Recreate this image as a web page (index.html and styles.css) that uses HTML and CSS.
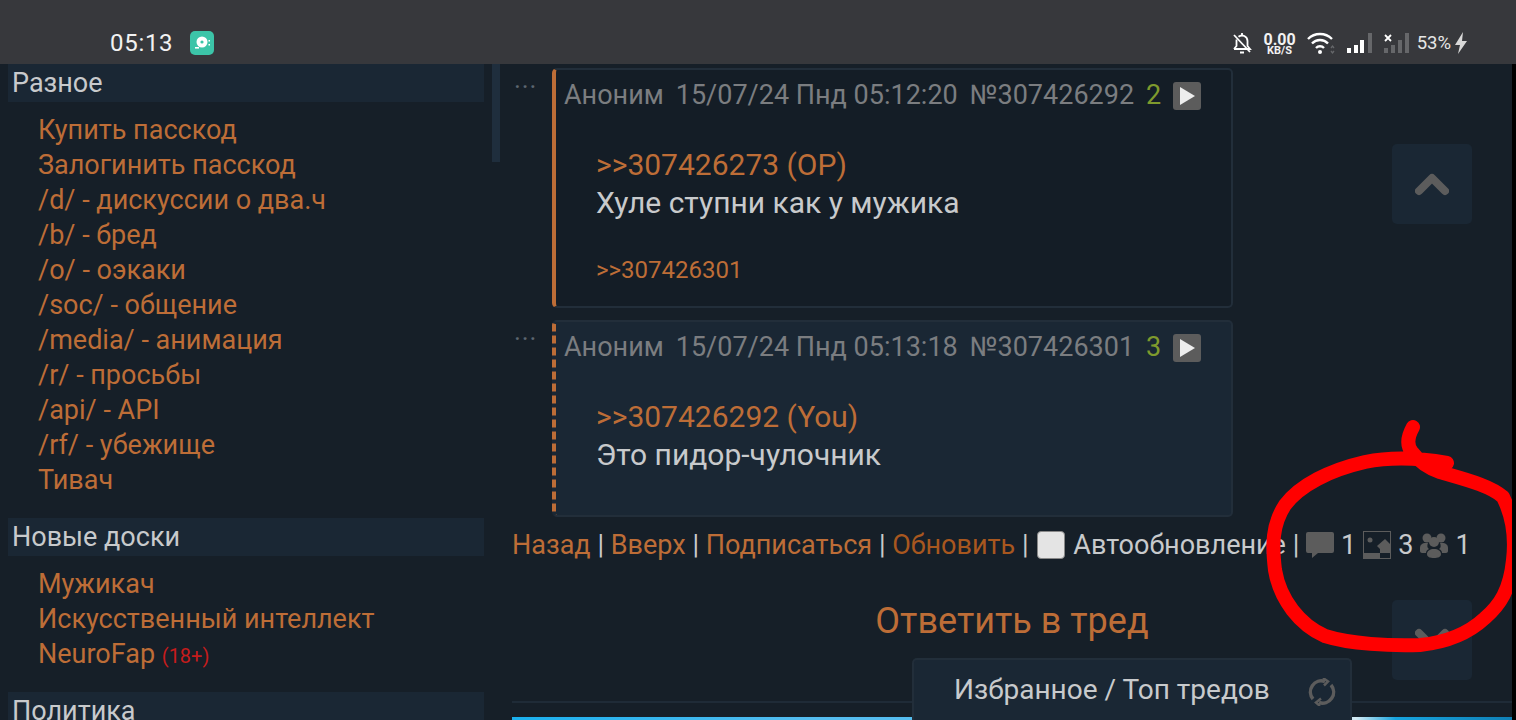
FILE: index.html
```html
<!DOCTYPE html>
<html lang="ru">
  <head>
    <meta charset="UTF-8" />
    <meta name="viewport" content="width=device-width, initial-scale=1.0" />
    <title>Тред</title>
    <link rel="stylesheet" href="styles.css">
  </head>
  <body>
    <div class="statusbar">
      <div class="status-left">
        <span class="clock">05:13</span>
        <span class="app-badge">
          <svg width="24" height="24" viewBox="0 0 24 24"><circle cx="12" cy="11" r="5.500" fill="#fff"/><circle cx="12" cy="11" r="1.600" fill="#3cc4a8"/><rect x="5" y="16" width="4" height="1.600" fill="#fff"/><rect x="18.500" y="9" width="1.500" height="1.500" fill="#fff"/><rect x="18.500" y="13" width="1.500" height="1.500" fill="#fff"/></svg>
        </span>
      </div>
      <div class="status-right">
        <svg class="bell" width="20" height="24" viewBox="0 0 20 24" fill="none" stroke="#fff" stroke-width="1.800"><path d="M2 18h16l-2.500-3V10a5.500 5.500 0 0 0-9-4.200M4.500 8.500V15L2 18"/><path d="M8 21.500h4" stroke-width="2"/><path d="M2 4l16 17"/><path d="M10 2v2"/></svg>
        <span class="netspeed"><b>0.00</b><b class="unit">KB/S</b></span>
        <svg class="wifi" width="36" height="24" viewBox="0 0 36 24" fill="none" stroke="#fff" stroke-width="2.400"><path d="M1 8a17 17 0 0 1 24 0"/><path d="M5 12.500a11 11 0 0 1 16 0"/><path d="M9 17a5.500 5.500 0 0 1 8 0"/><circle cx="13" cy="21" r="2" fill="#fff" stroke="none"/><path d="M24 17l1.500-2 1.500 2M24 20l1.500 2 1.500-2" stroke="#66676a" stroke-width="1.300"/></svg>
        <svg width="26" height="22" viewBox="0 0 26 22"><rect x="0" y="16" width="4" height="5" fill="#fff"/><rect x="7" y="13" width="4" height="8" fill="#fff"/><rect x="13" y="8" width="4" height="13" fill="#fff"/><rect x="21" y="1" width="4" height="20" fill="#66676a"/></svg>
        <svg width="26" height="22" viewBox="0 0 26 22"><path d="M1 3l6 6M7 3l-6 6" stroke="#fff" stroke-width="1.800"/><rect x="0" y="16" width="4" height="5" fill="#66676a"/><rect x="7" y="13" width="4" height="8" fill="#66676a"/><rect x="14" y="8" width="4" height="13" fill="#66676a"/><rect x="21" y="1" width="4" height="20" fill="#66676a"/></svg>
        <span class="battery">53%</span>
        <svg class="bolt" width="14" height="24" viewBox="0 0 14 24"><path d="M9 1L1 14h5l-2 9 9-13H8z" fill="#d8d8d8"/></svg>
      </div>
    </div>

    <div class="page">
      <aside class="sidebar">
        <div class="menu">
          <div class="menu-title">Разное</div>
          <ul class="menu-list">
            <li><a>Купить пасскод</a></li>
            <li><a>Залогинить пасскод</a></li>
            <li><a>/d/ - дискуссии о два.ч</a></li>
            <li><a>/b/ - бред</a></li>
            <li><a>/o/ - оэкаки</a></li>
            <li><a>/soc/ - общение</a></li>
            <li><a>/media/ - анимация</a></li>
            <li><a>/r/ - просьбы</a></li>
            <li><a>/api/ - API</a></li>
            <li><a>/rf/ - убежище</a></li>
            <li><a>Тивач</a></li>
          </ul>
        </div>
        <div class="menu">
          <div class="menu-title">Новые доски</div>
          <ul class="menu-list">
            <li><a>Мужикач</a></li>
            <li><a>Искусственный интеллект</a></li>
            <li><a>NeuroFap</a> <span class="adult">(18+)</span></li>
          </ul>
        </div>
        <div class="menu">
          <div class="menu-title">Политика</div>
        </div>
        <div class="scrollbar"></div>
      </aside>

      <main class="thread">
        <div class="post-row">
          <span class="dots">···</span>
          <article class="post post-op">
            <div class="post-head">
              <span class="name">Аноним</span>
              <span>15/07/24 Пнд 05:12:20</span>
              <span>№307426292</span>
              <span class="num">2</span>
              <span class="play"></span>
            </div>
            <div class="post-body">
              <a>&gt;&gt;307426273 (OP)</a><br>
              Хуле ступни как у мужика
            </div>
            <div class="replies"><a>&gt;&gt;307426301</a></div>
          </article>
        </div>

        <div class="post-row">
          <span class="dots">···</span>
          <article class="post post-mine">
            <div class="post-head">
              <span class="name">Аноним</span>
              <span>15/07/24 Пнд 05:13:18</span>
              <span>№307426301</span>
              <span class="num">3</span>
              <span class="play"></span>
            </div>
            <div class="post-body">
              <a>&gt;&gt;307426292 (You)</a><br>
              Это пидор-чулочник
            </div>
          </article>
        </div>

        <div class="thread-nav">
          <a>Назад</a><span class="sep">|</span><a>Вверх</a><span class="sep">|</span><a>Подписаться</a><span class="sep">|</span><a class="refresh">Обновить</a><span class="sep">|</span>
          <span class="check"></span><span class="auto">Автообновление</span><span class="sep">|</span>
          <svg class="stat-ico" width="28" height="26" viewBox="0 0 28 26"><path d="M2 0h24a2 2 0 0 1 2 2v17a2 2 0 0 1-2 2H12l-6 5v-5H2a2 2 0 0 1-2-2V2a2 2 0 0 1 2-2z" fill="#5c5c5c"/></svg>
          <span class="stat-num">1</span>
          <svg class="stat-ico" width="28" height="28" viewBox="0 0 28 28" fill="none"><rect x="0.500" y="0.500" width="27" height="27" stroke="#5c5c5c"/><circle cx="7" cy="9" r="2.500" fill="#5c5c5c"/><path d="M14 15l8-7 5 5v5H17z" fill="#5c5c5c"/><rect x="1" y="22" width="16" height="5" fill="#5c5c5c"/><rect x="17" y="18" width="10" height="4" fill="#5c5c5c"/></svg>
          <span class="stat-num">3</span>
          <svg class="stat-ico" width="28" height="25" viewBox="0 0 28 25" fill="#5c5c5c"><circle cx="7" cy="5" r="4.500"/><circle cx="21" cy="5" r="4.500"/><circle cx="14" cy="9" r="5"/><path d="M0 15c0-3 2-5 6-5h2c-1 2-1 5 1 6-2 1-3 2-3 4H2c-1 0-2-1-2-2zM28 15c0-3-2-5-6-5h-2c1 2 1 5-1 6 2 1 3 2 3 4h4c1 0 2-1 2-2zM7 21c0-3 3-5 7-5s7 2 7 5c0 3-3 4-7 4s-7-1-7-4z"/></svg>
          <span class="stat-num">1</span>
        </div>

        <div class="reply-link"><a>Ответить в тред</a></div>
        <hr class="divider">
        <div class="banner"></div>
      </main>
    </div>

    <button class="scroll-btn scroll-up">
      <svg width="34" height="26" viewBox="0 0 34 26"><path d="M4 20L17 7l13 13" fill="none" stroke="#5c5c5c" stroke-width="8" stroke-linecap="round" stroke-linejoin="round"/></svg>
    </button>
    <button class="scroll-btn scroll-down">
      <svg width="34" height="26" viewBox="0 0 34 26"><path d="M4 6l13 13L30 6" fill="none" stroke="#5c5c5c" stroke-width="8" stroke-linecap="round" stroke-linejoin="round"/></svg>
    </button>

    <div class="fav-panel">
      <span>Избранное / Топ тредов</span>
      <svg class="fav-refresh" width="28" height="28" viewBox="0 0 28 28" fill="none" stroke="#5c5c5c" stroke-width="3.500"><path d="M5 21A11 11 0 0 1 17 3.500"/><path d="M23 7a11 11 0 0 1-12 17.500"/><path d="M15 0l5 3.500-4 4" stroke-width="2.500"/><path d="M13 20.500l-5 4 4 3.500" stroke-width="2.500"/></svg>
    </div>

    <svg class="scribble" width="1516" height="720" viewBox="0 0 1516 720" fill="none" stroke="#ff0000" stroke-width="14" stroke-linecap="round" stroke-linejoin="round">
      <path d="M1413 427C1408 436 1406 445 1412 452C1418 460 1428 468 1440 472C1460 478 1490 485 1503 497C1512 515 1516 535 1513 560C1510 590 1500 605 1485 618C1470 632 1450 642 1420 645C1390 646 1350 644 1325 636C1300 625 1280 600 1275 570C1272 545 1272 525 1285 505C1300 485 1330 470 1365 462C1390 457 1420 458 1447 463"/>
    </svg>
    <div class="edge-strip"></div>
  </body>
</html>
```

FILE: styles.css
```css
* {
  box-sizing: border-box;
}

html,
body {
  height: 720px;
}

body {
  margin: 0;
  overflow: hidden;
  position: relative;
  background-color: #161f28;
  color: #c8cacc;
  font-family: Roboto, "Liberation Sans", sans-serif;
  font-size: 27px;
}

a {
  color: #bd6d37;
}

/* status bar */
.statusbar {
  height: 64px;
  background-color: #37383c;
  display: flex;
  justify-content: space-between;
  align-items: flex-end;
  padding: 0 48px 4px 110px;
}

.status-left {
  display: flex;
  align-items: center;
  gap: 17px;
  height: 30px;
  margin-bottom: 2px;
}

.clock {
  color: #f2f2f2;
  font-size: 24px;
  letter-spacing: 0.7px;
}

.app-badge {
  width: 24px;
  height: 24px;
  border-radius: 5px;
  background-color: #3cc4a8;
  display: flex;
}

.status-right {
  display: flex;
  align-items: center;
  gap: 11px;
  height: 34px;
}

.netspeed {
  display: flex;
  flex-direction: column;
  align-items: center;
  color: #f2f2f2;
  font-size: 16px;
  line-height: 13px;
  margin-top: 2px;
}

.netspeed .unit {
  font-size: 11px;
  line-height: 10px;
}

.wifi {
  margin-right: -7px;
}

.battery {
  color: #e6e6e6;
  font-size: 18.500px;
  margin-left: -4px;
}

.bolt {
  margin-left: -8px;
}

/* layout */
.page {
  display: flex;
  height: 656px;
}

.sidebar {
  width: 512px;
  flex-shrink: 0;
  padding-left: 8px;
  position: relative;
}

.scrollbar {
  position: absolute;
  top: 0;
  left: 492px;
  width: 8px;
  height: 98px;
  background-color: #1f2e3d;
}

.menu-title {
  width: 476px;
  height: 38px;
  line-height: 38px;
  padding-left: 4px;
  background-color: #1a2734;
  color: #c8cacc;
}

.menu-list {
  list-style: none;
  margin: 0;
  padding: 11px 0 20px 30px;
}

.menu-list li {
  height: 35px;
  line-height: 35px;
}

.adult {
  color: #c51c1c;
  font-size: 20px;
}

.thread {
  flex: 1;
  min-width: 0;
  padding-top: 4px;
}

.post-row {
  display: flex;
  margin-bottom: 12px;
}

.dots {
  width: 40px;
  color: #5c6670;
  font-size: 26px;
  line-height: 38px;
  letter-spacing: 1px;
  padding-left: 2px;
  flex-shrink: 0;
}

.post {
  width: 681px;
  border: 2px solid #222e3a;
  border-radius: 5px;
  padding-left: 8px;
}

.post-op {
  height: 240px;
  background-color: #141d26;
  border-left: 4px solid #bd6d37;
}

.post-mine {
  height: 197px;
  background-color: #1a2734;
  border-left: 4px dashed #bd6d37;
}

.post-head {
  display: flex;
  align-items: center;
  gap: 12px;
  height: 50px;
  color: #7b7d80;
}

.post-head .num {
  color: #7f9a2d;
}

.play {
  width: 28px;
  height: 28px;
  margin-top: 2px;
  border-radius: 3px;
  background-color: #5c5c5c;
  position: relative;
}

.play::after {
  content: "";
  position: absolute;
  left: 7px;
  top: 5px;
  border-left: 15px solid #eee;
  border-top: 9px solid transparent;
  border-bottom: 9px solid transparent;
}

.post-body {
  padding: 26px 0 0 32px;
  line-height: 38px;
  font-size: 30px;
}

.replies {
  padding: 34px 0 0 32px;
  font-size: 24px;
}

.thread-nav {
  display: flex;
  align-items: center;
  height: 48px;
  margin-top: -8px;
  white-space: nowrap;
}

.sep {
  margin: 0 6.750px;
  color: #c8cacc;
}

.refresh {
  color: #a8571f;
}

.check {
  width: 28px;
  height: 28px;
  margin: 0 8px 0 2px;
  border: 1px solid #888;
  border-radius: 4px;
  background-color: #e4e4e4;
}

.stat-ico {
  margin-right: 7px;
}

.stat-num {
  margin-right: 7px;
}

.reply-link {
  margin-top: 32px;
  text-align: center;
  font-size: 36px;
  line-height: 40px;
  padding-right: 4px;
}

.divider {
  margin: 60px 0 0 0;
  border: 0;
  border-top: 2px solid #1f2b37;
}

.banner {
  height: 16px;
  margin-top: 14px;
  background: linear-gradient(90deg, #1ab0ee 0%, #55bdef 30%, #55bdef 80%, #d8ecf4 84%, #17a4de 88%, #0f7fb5 100%);
}

/* floating */
.scroll-btn {
  position: absolute;
  left: 1392px;
  width: 80px;
  height: 80px;
  padding: 0;
  border: 0;
  border-radius: 5px;
  background-color: #1a2734;
  display: flex;
  align-items: center;
  justify-content: center;
}

.scroll-up {
  top: 144px;
}

.scroll-down {
  top: 600px;
}

.fav-panel {
  position: absolute;
  left: 912px;
  top: 658px;
  width: 440px;
  height: 62px;
  padding: 0 14px 0 40px;
  background-color: #1a2734;
  border: 2px solid #222e3a;
  border-bottom: 0;
  border-radius: 5px 5px 0 0;
  display: flex;
  align-items: flex-start;
  justify-content: space-between;
  font-size: 28px;
  line-height: 60px;
}

.fav-refresh {
  margin-top: 18px;
}

.scribble {
  position: absolute;
  left: 0;
  top: 0;
  pointer-events: none;
}

.edge-strip {
  position: absolute;
  top: 64px;
  right: 0;
  width: 4px;
  height: 656px;
  background-color: #000;
}
```
